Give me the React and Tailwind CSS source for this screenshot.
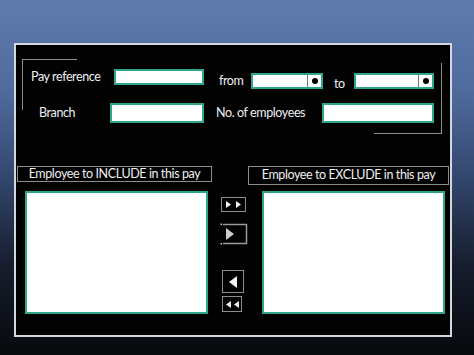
import React from "react";

const font = { fontFamily: "Lato, 'Open Sans', sans-serif" };

function TriRight({ className = "" }) {
  return (
    <svg width="5" height="7" viewBox="0 0 5 7" className={className}>
      <polygon points="0,0 5,3.5 0,7" fill="#f2f2f2" />
    </svg>
  );
}

function TriLeft({ className = "" }) {
  return (
    <svg width="5" height="7" viewBox="0 0 5 7" className={className}>
      <polygon points="5,0 0,3.5 5,7" fill="#f2f2f2" />
    </svg>
  );
}

function DateBox({ width }) {
  return (
    <div
      className={`flex h-[16px] border-2 border-[#2fa58c] bg-white ${width}`}
    >
      <div className="flex-1" />
      <div className="flex w-[14px] items-center justify-center border-l border-[#777]">
        <span className="h-[6px] w-[6px] rounded-full bg-black" />
      </div>
    </div>
  );
}

export default function App() {
  return (
    <div
      className="h-[355px] w-[474px] overflow-hidden bg-[linear-gradient(180deg,#5f7bad_0%,#506c9e_25%,#33476e_50%,#161d2d_75%,#08090d_100%)] pl-[14px] pt-[43px] text-[#f0f0f0]"
      style={font}
    >
      <div className="h-[294px] w-[438px] border-2 border-[#d3d7de] bg-[#020203]">
        {/* top form */}
        <div className="relative h-[121px] pt-[24px] text-[12.5px] tracking-[-0.4px]">
          <div className="absolute left-[6px] top-[14px] h-[51px] w-[55px] border-l-[1.5px] border-t-[1.5px] border-[#8c8c8c]" />
          <div className="absolute left-[358px] top-[18px] h-[71px] w-[68px] border-b-[1.5px] border-r-[1.5px] border-[#8c8c8c]" />

          <div className="flex h-[20px] items-start pl-[15px]">
            <div className="flex h-[16px] w-[83px] items-center">Pay reference</div>
            <div className="h-[16px] w-[90px] border-2 border-[#2fa58c] bg-white" />
            <div className="ml-[15px] mt-[4px] flex h-[16px] w-[32px] items-center">from</div>
            <div className="mt-[4px]">
              <DateBox width="w-[72px]" />
            </div>
            <div className="ml-[11px] mt-[7px] flex h-[16px] w-[20px] items-center">to</div>
            <div className="mt-[4px]">
              <DateBox width="w-[80px]" />
            </div>
          </div>

          <div className="mt-[14px] flex h-[20px] items-center pl-[23px]">
            <div className="w-[71px]">Branch</div>
            <div className="h-[20px] w-[94px] border-2 border-[#2fa58c] bg-white" />
            <div className="ml-[12px] w-[106px]">No. of employees</div>
            <div className="h-[20px] w-[112px] border-2 border-[#2fa58c] bg-white" />
          </div>
        </div>

        {/* lists */}
        <div className="flex pl-[1px] text-[12.5px] tracking-[-0.4px]">
          <div className="w-[195px]">
            <div className="flex h-[16px] items-center justify-center border-[1.5px] border-[#8c8c8c]">
              Employee to INCLUDE in this pay
            </div>
            <div className="ml-[8px] mt-[9px] h-[123px] w-[183px] border-2 border-[#2fa58c] bg-white" />
          </div>

          <div className="flex w-[36px] flex-col">
            <div className="ml-[9px] mt-[31px] flex h-[15px] w-[25px] items-center justify-center gap-[5px] border-[1.5px] border-[#8c8c8c]">
              <TriRight />
              <TriRight />
            </div>
            <svg width="29" height="23" viewBox="0 0 29 23" className="ml-[8px] mt-[11px]">
              <rect x="0.5" y="0.5" width="1.5" height="1.5" fill="#cfcfcf" />
              <rect x="0.5" y="20" width="1.5" height="1.5" fill="#cfcfcf" />
              <line x1="3" y1="1.5" x2="27" y2="1.5" stroke="#9a9a9a" strokeWidth="1.5" />
              <line x1="3" y1="20.5" x2="27" y2="20.5" stroke="#9a9a9a" strokeWidth="1.5" />
              <line x1="26.5" y1="1" x2="26.5" y2="21" stroke="#9a9a9a" strokeWidth="1.5" />
              <polygon points="6,5 14,11 6,17" fill="#cdcdcd" />
            </svg>
            <div className="ml-[10px] mt-[24px] flex h-[23px] w-[22px] items-center justify-center border-[1.5px] border-[#8c8c8c]">
              <svg width="8" height="12" viewBox="0 0 8 12">
                <polygon points="8,0 0,6 8,12" fill="#f5f5f5" />
              </svg>
            </div>
            <div className="ml-[10px] mt-[3px] flex h-[16px] w-[20px] items-center justify-center gap-[3px] border-[1.5px] border-[#8c8c8c]">
              <TriLeft />
              <TriLeft />
            </div>
          </div>

          <div className="w-[201px]">
            <div className="flex h-[19px] items-center justify-center border-[1.5px] border-[#8c8c8c]">
              Employee to EXCLUDE in this pay
            </div>
            <div className="ml-[14px] mt-[6px] h-[123px] w-[183px] border-2 border-[#2fa58c] bg-white" />
          </div>
        </div>
      </div>
    </div>
  );
}
